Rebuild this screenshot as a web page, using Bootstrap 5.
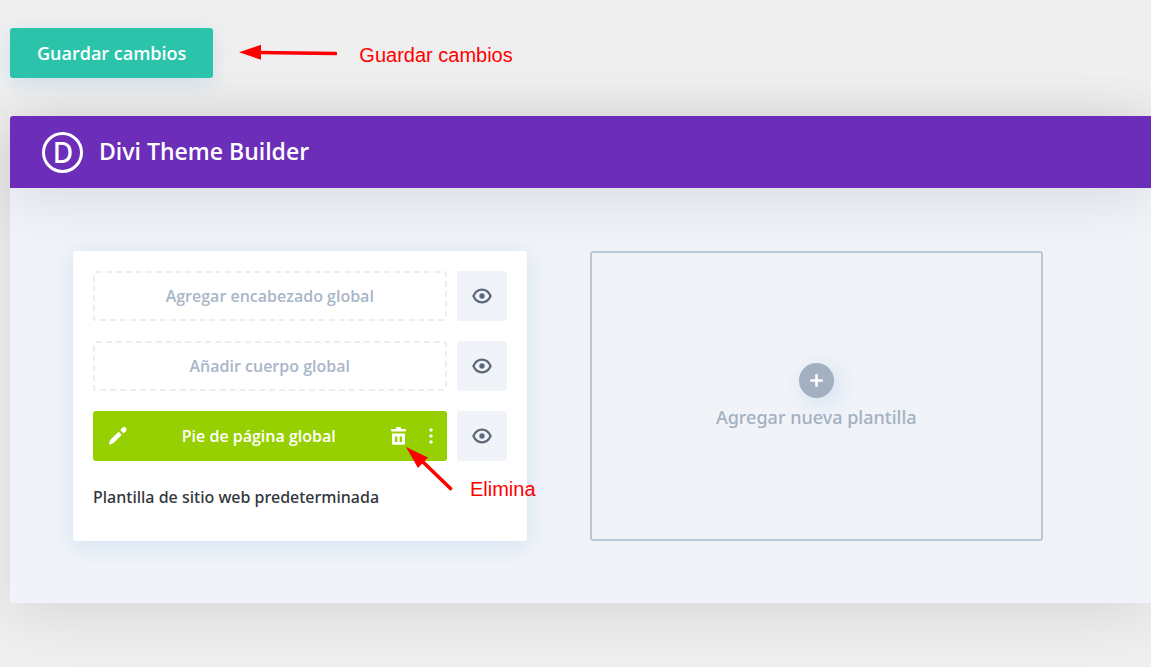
<!DOCTYPE html>
<html lang="es">
<head>
<meta charset="utf-8">
<meta name="viewport" content="width=device-width, initial-scale=1">
<title>Divi Theme Builder</title>
<link href="https://cdn.jsdelivr.net/npm/bootstrap@5.3.0/dist/css/bootstrap.min.css" rel="stylesheet">
<style>
body{background:#efefef;font-family:"Open Sans",sans-serif;overflow-x:hidden}
.page{padding:28px 0 64px 10px}
.topbar{margin-bottom:38px}
.save{height:50px;padding:0 27px;background:#2bc4ab;color:#fff;font-size:18px;font-weight:600;line-height:24px;border:0;border-radius:3px;box-shadow:0 5px 20px rgba(43,135,218,.15)}
.save:hover{background:#25b39c;color:#fff}
.note{color:#f00;font:20px/24px "Liberation Sans",sans-serif}
.to-save{margin-left:26px;gap:22px}
.panel{background:#f0f3f8;border-radius:3px 0 0 3px;box-shadow:0 10px 60px rgba(0,0,0,.1)}
.panel-top{height:72px;padding:0 32px;gap:16px;background:#6c2eb9;color:#fff;border-radius:3px 0 0 0;box-shadow:0 10px 60px rgba(0,0,0,.1)}
.panel-top h1{padding-bottom:2px;font-size:23px;line-height:32px;font-weight:600}
.logo{width:41px;height:41px;border:3px solid #fff;border-radius:50%;font-family:"Noto Sans",sans-serif;font-size:28px;line-height:32px;font-weight:500;padding-left:1px}
.templates{display:grid;grid-template-columns:1fr 1fr;gap:63px;padding:63px 108px 62px 63px}
.template{padding:20px;min-height:290px;background:#fff;border-radius:3px;box-shadow:0 5px 20px rgba(43,135,218,.15)}
.part-row{gap:10px;margin-bottom:20px}
.part,.part-on,.view{height:50px;border-radius:3px;font-size:16px;font-weight:600}
.part{background:#fff;border:2px dashed #e7eef5;color:#a9b6c8}
.part-on{background:#97d000;color:#fff;padding:0 10px 0 16px}
.view{width:50px;padding:0;border:0;background:#f0f3f8}
.plain{padding:0;border:0;background:none;color:inherit;font-weight:600}
.more{margin-left:19px}
.tpl-name{margin-top:4px;font-family:"Noto Sans",sans-serif;font-size:16px;line-height:24px;font-weight:500;color:#32373c}
.add-new{padding:0 0 2px;border:2px solid #bcc8d6;border-radius:3px;background:transparent;color:#a3b0c2;font-family:"Noto Sans",sans-serif;font-size:18px;line-height:24px;font-weight:500}
.plus{width:35px;height:35px;border-radius:50%;background:#a3b0c2;box-shadow:5px 5px 20px rgba(43,135,218,.15);margin:2px 0 7px}
.to-delete{top:196px;right:-9px;gap:17px;pointer-events:none}
.to-delete .note{margin-top:30px}
</style>
</head>
<body>
<svg class="d-none" aria-hidden="true">
<symbol id="eye" viewBox="0 0 20 16"><path d="M10 1.700C14 1.700 17 4.400 18.600 8C17 11.600 14 14.300 10 14.300S3 11.600 1.400 8C3 4.400 6 1.700 10 1.700Z" fill="none" stroke="#5c6978" stroke-width="2.200"/><circle cx="10" cy="8" r="2.700" fill="#5c6978"/></symbol>
</svg>
<div class="page">
  <div class="topbar d-flex align-items-center">
    <button type="button" class="btn save">Guardar cambios</button>
    <div class="to-save d-flex align-items-center">
      <svg width="98" height="18" viewBox="0 0 98 18" aria-hidden="true"><path d="M20 8.500L96.500 9.500" stroke="red" stroke-width="3.600" stroke-linecap="round"/><path d="M0 8.200L22 .8V15.800Z" fill="red"/></svg>
      <span class="note mt-1">Guardar cambios</span>
    </div>
  </div>
  <main class="panel">
    <header class="panel-top d-flex align-items-center">
      <span class="logo d-flex align-items-center justify-content-center" aria-hidden="true">D</span>
      <h1 class="mb-0">Divi Theme Builder</h1>
    </header>
    <div class="templates">
      <section class="template position-relative d-flex flex-column">
        <div class="part-row d-flex">
          <button type="button" class="part flex-grow-1">Agregar encabezado global</button>
          <button type="button" class="view d-flex align-items-center justify-content-center flex-shrink-0" aria-label="Ver encabezado"><svg width="20" height="16"><use href="#eye"/></svg></button>
        </div>
        <div class="part-row d-flex">
          <button type="button" class="part flex-grow-1">Añadir cuerpo global</button>
          <button type="button" class="view d-flex align-items-center justify-content-center flex-shrink-0" aria-label="Ver cuerpo"><svg width="20" height="16"><use href="#eye"/></svg></button>
        </div>
        <div class="part-row d-flex">
          <div class="part-on flex-grow-1 d-flex align-items-center">
            <button type="button" class="plain d-flex" aria-label="Editar"><svg width="18" height="18" viewBox="0 0 18 18" fill="#fff"><path d="M0 17.500Q0 14.500 2 12L9.700 4.700L12.800 7.800L5.300 15.300Q3 17.500 0 17.500Z"/><path d="M11.300 3.300L13 1C14.500 -.5 16.500 0 17.200 1.200C17.900 2.500 17.500 4 16.500 4.800L14.500 6.300Z"/></svg></button>
            <button type="button" class="plain flex-grow-1">Pie de página global</button>
            <button type="button" class="plain d-flex" aria-label="Eliminar"><svg width="15" height="18" viewBox="0 0 15 18" fill="#fff"><path d="M5 2V1.200Q5 0 6.200 0H8.800Q10 0 10 1.200V2H14Q15 2 15 3.200Q15 4.500 14 4.500H1Q0 4.500 0 3.200Q0 2 1 2Z"/><path fill-rule="evenodd" d="M1 6.500H14V16.500Q14 17.700 12.800 17.700H2.200Q1 17.700 1 16.500ZM4 9.500V15H6.400V9.500ZM8.600 9.500V15H11V9.500Z"/></svg></button>
            <button type="button" class="plain more d-flex" aria-label="Más opciones"><svg width="12" height="16" viewBox="0 0 12 16" fill="#fff"><circle cx="6" cy="2" r="1.700"/><circle cx="6" cy="8" r="1.700"/><circle cx="6" cy="14" r="1.700"/></svg></button>
          </div>
          <button type="button" class="view d-flex align-items-center justify-content-center flex-shrink-0" aria-label="Ver pie de página"><svg width="20" height="16"><use href="#eye"/></svg></button>
        </div>
        <div class="tpl-name">Plantilla de sitio web predeterminada</div>
        <div class="to-delete position-absolute d-flex">
          <svg width="47" height="44" viewBox="0 0 47 44" aria-hidden="true"><path d="M16 14L44.500 41.500" stroke="red" stroke-width="3.600" stroke-linecap="round"/><path d="M0 0L22 10.500L12 21Z" fill="red"/></svg>
          <span class="note">Elimina</span>
        </div>
      </section>
      <button type="button" class="add-new d-flex flex-column align-items-center justify-content-center">
        <span class="plus d-flex align-items-center justify-content-center"><svg width="13" height="13" viewBox="0 0 13 13" stroke="#fff" stroke-width="2.600" stroke-linecap="round"><path d="M6.500 1.300V11.700M1.300 6.500H11.700"/></svg></span>
        Agregar nueva plantilla
      </button>
    </div>
  </main>
</div>
<script src="https://cdn.jsdelivr.net/npm/bootstrap@5.3.0/dist/js/bootstrap.bundle.min.js"></script>
</body>
</html>
